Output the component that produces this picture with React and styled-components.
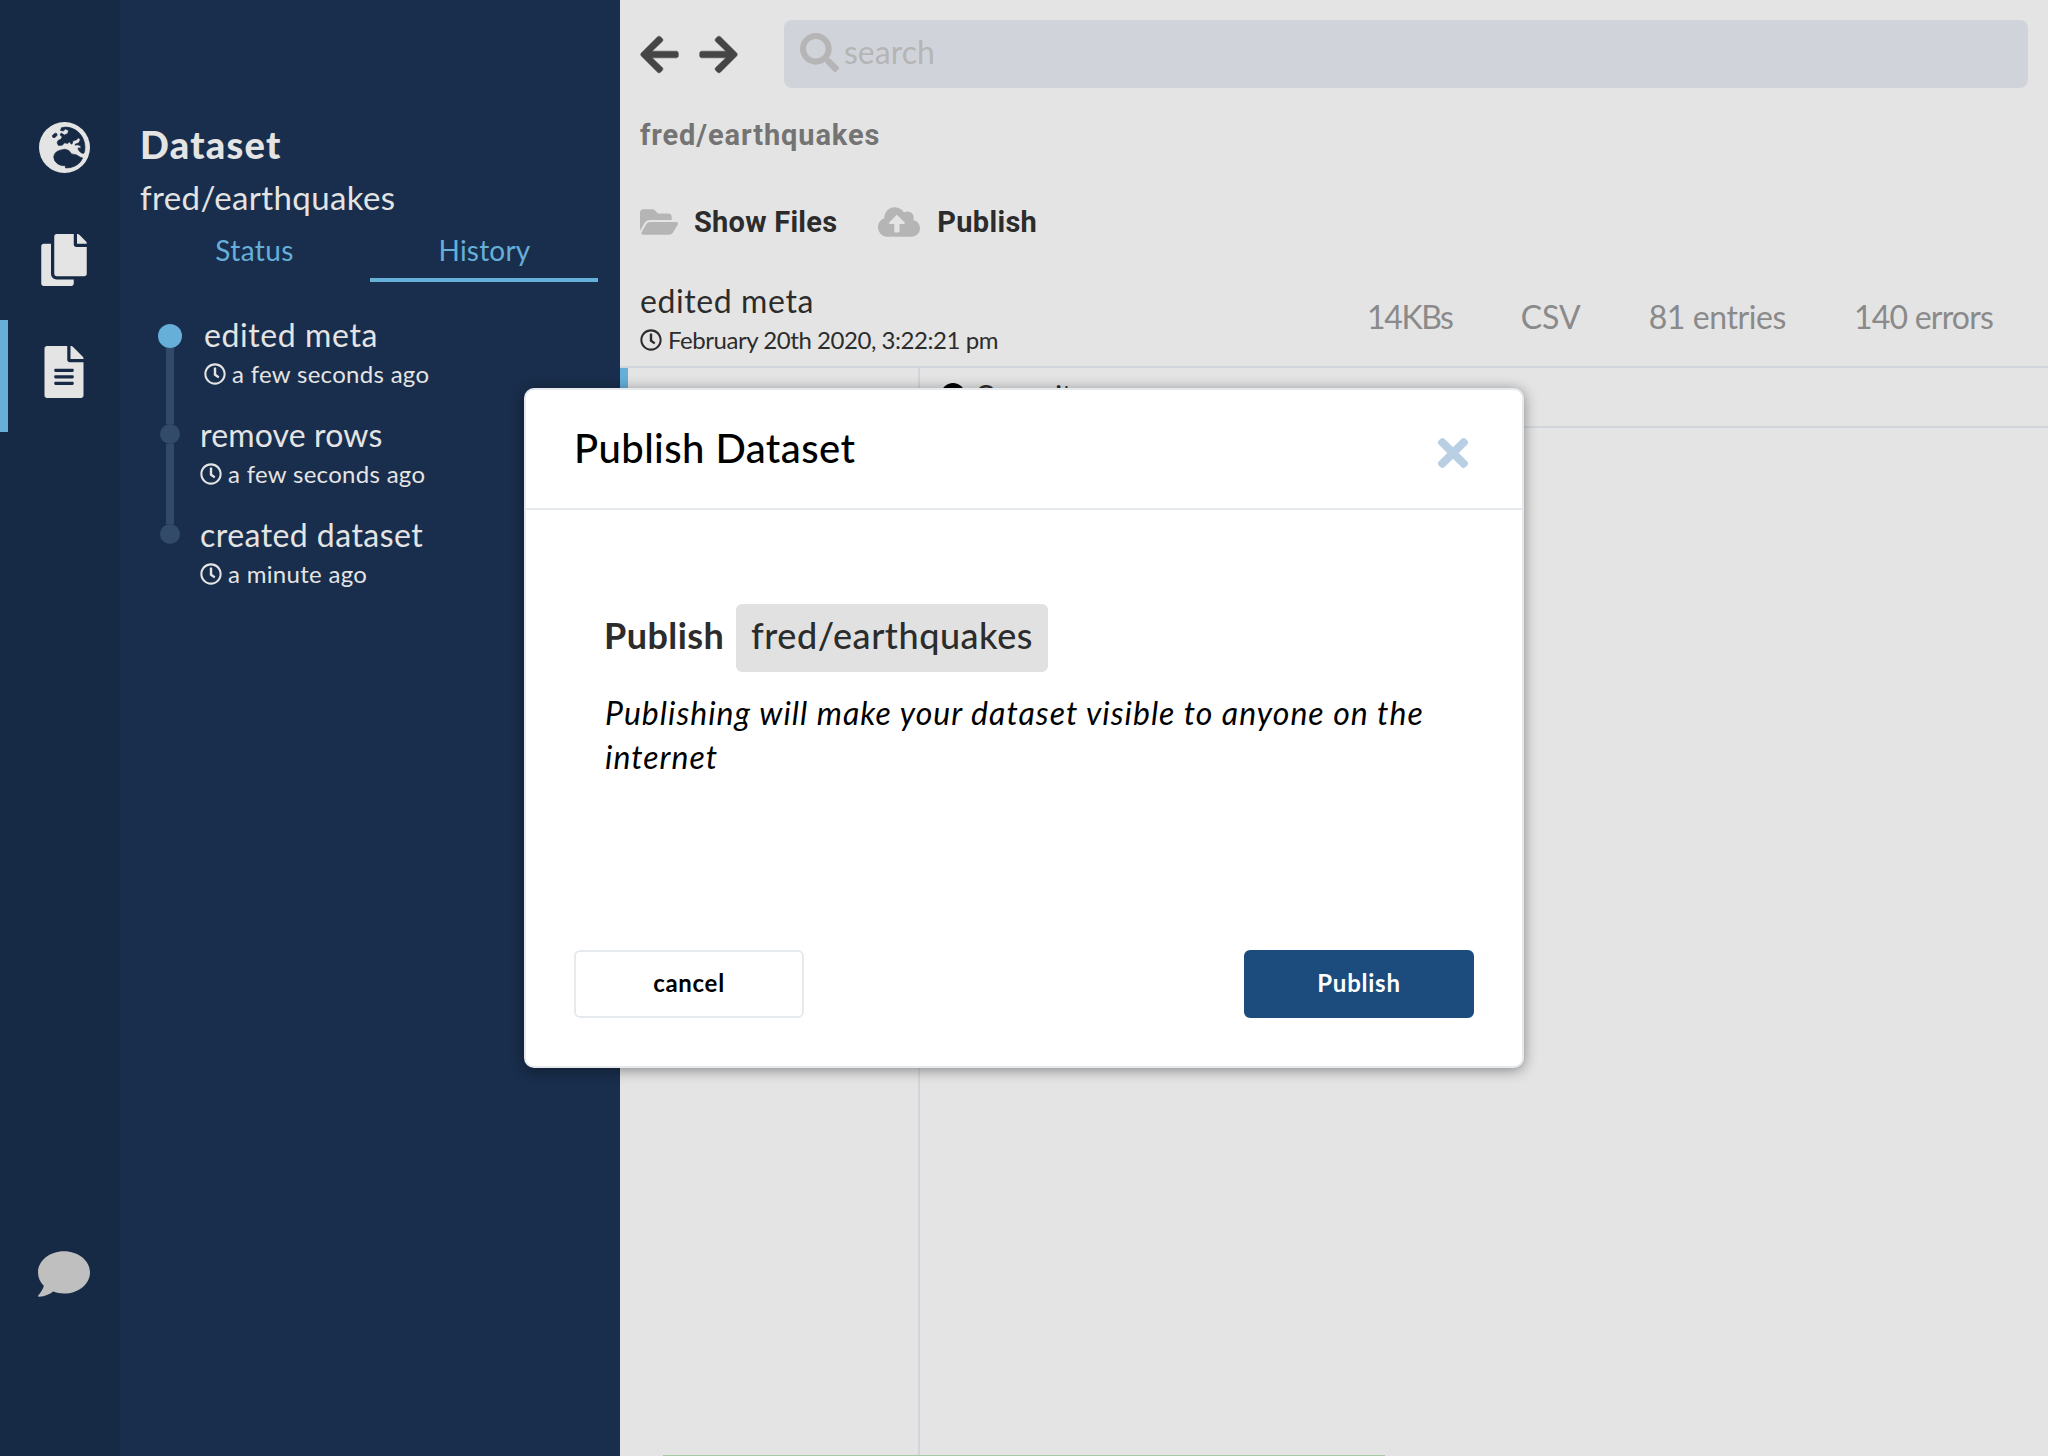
import React from 'react';
import styled, { createGlobalStyle } from 'styled-components';
import {
  FaArrowLeft,
  FaArrowRight,
  FaSearch,
  FaCopy,
  FaFileAlt,
  FaComment,
  FaFolderOpen,
  FaCloudUploadAlt,
  FaRegClock,
  FaTimes,
} from 'react-icons/fa';

const Global = createGlobalStyle`
  * { box-sizing: border-box; }
  body { margin: 0; overflow: hidden; font-family: Lato, "Liberation Sans", sans-serif; }
  svg { display: block; flex: none; }
`;

const Page = styled.div`
  position: relative;
  display: flex;
  width: 2048px;
  height: 1456px;
  overflow: hidden;
  background: #e4e4e4;
`;

const Text = styled.div`
  font-family: ${(p) => p.$family || 'inherit'};
  font-size: ${(p) => p.$size}px;
  line-height: ${(p) => p.$line}px;
  font-weight: ${(p) => p.$weight || 400};
  font-style: ${(p) => (p.$italic ? 'italic' : 'normal')};
  letter-spacing: ${(p) => p.$track || 0}px;
  color: ${(p) => p.$color || 'inherit'};
  white-space: nowrap;
`;

const Rail = styled.nav`
  display: flex;
  flex-direction: column;
  width: 120px;
  flex: none;
  padding: 96px 0 122px;
  background: #172a45;
  color: #e4e4e4;
`;

const RailItem = styled.div`
  display: flex;
  align-items: center;
  justify-content: center;
  height: 112px;
  padding: 0 ${(p) => (p.$active ? 8 : 0)}px ${(p) => p.$lift || 8}px 8px;
  margin-top: ${(p) => (p.$bottom ? 'auto' : 0)};
  border-left: ${(p) => (p.$active ? '8px solid #65afd9' : '0')};
  color: ${(p) => (p.$bottom ? '#bfbfbf' : 'inherit')};
`;

const Sidebar = styled.aside`
  width: 500px;
  flex: none;
  padding: 120px 22px 0 20px;
  background: #192e4c;
  color: #e4e4e4;
`;

const Tabs = styled.div`
  display: flex;
  gap: 2px;
  height: 55px;
  padding-top: 1px;
  color: #65afd9;
`;

const Tab = styled.div`
  flex: 1;
  display: flex;
  justify-content: center;
  padding-left: 1px;
  border-bottom: 4px solid ${(p) => (p.$active ? '#65afd9' : 'transparent')};
`;

const Timeline = styled.div`
  padding-top: 32px;
`;

const Commit = styled.div`
  display: flex;
  height: 100px;
`;

const Marker = styled.div`
  display: flex;
  flex-direction: column;
  align-items: center;
  width: 60px;
  flex: none;
`;

const Segment = styled.div`
  width: 8px;
  height: 10px;
  flex: ${(p) => (p.$grow ? '1' : 'none')};
  background: ${(p) => (p.$hidden ? 'transparent' : '#324b68')};
`;

const Dot = styled.div`
  width: ${(p) => (p.$active ? 24 : 20)}px;
  height: ${(p) => (p.$active ? 24 : 20)}px;
  border-radius: 50%;
  background: ${(p) => (p.$active ? '#65afd9' : '#324b68')};
`;

const CommitBody = styled.div`
  padding: 1px 0 0 ${(p) => (p.$active ? 4 : 0)}px;
`;

const Stamp = styled.div`
  display: flex;
  align-items: center;
  gap: 6px;
`;

const Main = styled.main`
  flex: 1;
  min-width: 0;
  display: flex;
  flex-direction: column;
`;

const TopBar = styled.header`
  display: flex;
  align-items: center;
  height: 108px;
  padding: 0 20px 0 18px;
`;

const Arrows = styled.div`
  display: flex;
  gap: 16px;
  width: 146px;
  color: #454545;
  stroke: #454545;

  svg {
    stroke-width: 6px;
    stroke-linejoin: round;
  }
`;

const Search = styled.div`
  flex: 1;
  display: flex;
  align-items: center;
  gap: 5px;
  height: 68px;
  padding: 0 16px 4px;
  border-radius: 8px;
  background: #d0d4da;
  color: #b5b5b5;
`;

const Crumb = styled.div`
  padding: 5px 20px 0;
`;

const Actions = styled.div`
  display: flex;
  gap: 41px;
  height: 56px;
  margin-top: 37px;
  padding: 0 20px;
  color: #b5b5b5;
`;

const Action = styled.div`
  display: flex;
  align-items: center;
  gap: ${(p) => p.$gap}px;
`;

const Info = styled.section`
  display: flex;
  justify-content: space-between;
  height: 118px;
  padding: 31px 55px 0 20px;
  border-bottom: 2px solid #d0d6db;
  color: #2c2c2c;
`;

const Stats = styled.div`
  display: flex;
  gap: 68px;
  padding-top: 16px;
  color: #8a8a8a;
`;

const Body = styled.section`
  flex: 1;
  display: flex;
  min-height: 0;
`;

const Components = styled.div`
  width: 300px;
  border-right: 2px solid #d0d6db;
`;

const ActiveComponent = styled.div`
  height: 60px;
  border-left: 8px solid #65afd9;
`;

const Detail = styled.div`
  flex: 1;
`;

const DetailHead = styled.div`
  display: flex;
  align-items: center;
  gap: 10px;
  height: 60px;
  padding: 0 21px 4px;
  border-bottom: 2px solid #d0d6db;
  color: #2c2c2c;
`;

const Disc = styled.div`
  width: 24px;
  height: 24px;
  border-radius: 50%;
  background: #000;
`;

const Toast = styled.div`
  position: absolute;
  left: 663px;
  bottom: 0;
  width: 722px;
  height: 1px;
  background: #a6cba4;
`;

const Modal = styled.div`
  position: absolute;
  left: 524px;
  top: 388px;
  width: 1000px;
  height: 680px;
  display: flex;
  flex-direction: column;
  border: 2px solid #e6eaef;
  border-radius: 10px;
  background: #fff;
  box-shadow: 0 2px 14px rgba(0, 0, 0, 0.42);
`;

const ModalHead = styled.div`
  display: flex;
  justify-content: space-between;
  height: 120px;
  padding: 26px 47px 0 48px;
  border-bottom: 2px solid #e6eaef;
`;

const Close = styled.div`
  height: 80px;
  display: flex;
  align-items: center;
  color: #b9cfe3;
  margin-top: -3px;
`;

const ModalBody = styled.div`
  flex: 1;
  padding: 94px 78px 0 79px;
`;

const Subject = styled.div`
  display: flex;
  align-items: flex-start;
  gap: 12px;
  height: 68px;
  margin: 0 0 19px -1px;
  color: #2c2c2c;
`;

const Chip = styled.div`
  display: flex;
  width: 312px;
  height: 68px;
  justify-content: center;
  border-radius: 6px;
  background: #e1e1e1;
`;

const PublishLabel = styled.div`
  width: 120px;
  height: 68px;
`;

const ModalFoot = styled.div`
  display: flex;
  justify-content: space-between;
  padding: 0 48px 48px;
`;

const Button = styled.button`
  display: flex;
  justify-content: center;
  width: 230px;
  height: 68px;
  padding: 0;
  border: 2px solid ${(p) => (p.$primary ? '#1c4c7e' : '#e6eaee')};
  border-radius: 6px;
  background: ${(p) => (p.$primary ? '#1c4c7e' : '#fff')};
  color: ${(p) => (p.$primary ? '#fff' : '#000')};
  font-family: inherit;
`;

const Globe = () => (
  <svg width="51" height="51" viewBox="45 38 152 152">
    <circle cx="121" cy="114" r="76" fill="#e4e4e4" />
    <g fill="#172a45" stroke="#172a45" strokeWidth="2" strokeLinejoin="round">
      <path d="M112 55 Q122 52 134 54 C162 60 182 84 182 114 Q182 124 179 131 L173 131 L166 126 L161 118 L163 115 L170 117 L169 109 L160 106 L153 107 L153 104 L164 100 L168 91 L163 85 L157 91 L146 94 L145 101 L141 104 L136 97 L130 102 L122 100 L114 107 L103 108 L99 100 L102 93 L111 89 L114 82 L108 77 L111 71 L121 77 L131 72 L133 63 L124 59 L117 65 L109 63 Z" />
      <path d="M89 142 Q90 127 108 122 L122 119 L134 123 L142 133 L157 136 L168 143 L175 145 Q166 168 138 174 L124 175 L123 168 Q112 170 101 163 Q89 155 89 142 Z" />
      <ellipse cx="92" cy="78" rx="8" ry="5" transform="rotate(-40 92 78)" />
    </g>
  </svg>
);

const HEADING = 'Roboto, "Liberation Sans", sans-serif';

const commits = [
  { title: 'edited meta', when: 'a few seconds ago', track: 0.6 },
  { title: 'remove rows', when: 'a few seconds ago', track: 0.15 },
  { title: 'created dataset', when: 'a minute ago', track: 0.45 },
];

const stats = [
  { label: '14KBs', track: -1.3 },
  { label: 'CSV', track: 0 },
  { label: '81 entries', track: -0.4 },
  { label: '140 errors', track: -0.8 },
];

export default function App() {
  return (
    <Page>
      <Global />
      <Rail>
        <RailItem $lift={10}><Globe /></RailItem>
        <RailItem><FaCopy size={52} /></RailItem>
        <RailItem $active><FaFileAlt size={52} /></RailItem>
        <RailItem $bottom><FaComment size={52} /></RailItem>
      </Rail>
      <Sidebar>
        <Text $size={38} $line={48} $weight={900} $track={1.25}>Dataset</Text>
        <Text $size={33} $line={59} $track={0.4}>fred/earthquakes</Text>
        <Tabs>
          <Tab><Text $size={28} $line={45} $track={0.4}>Status</Text></Tab>
          <Tab $active><Text $size={28} $line={45} $track={0.2}>History</Text></Tab>
        </Tabs>
        <Timeline>
          {commits.map((c, i) => (
            <Commit key={c.title}>
              <Marker>
                <Segment $hidden={i === 0} />
                <Dot $active={i === 0} />
                <Segment $grow $hidden={i === commits.length - 1} />
              </Marker>
              <CommitBody $active={i === 0}>
                <Text $size={32} $line={40} $track={c.track}>{c.title}</Text>
                <Stamp>
                  <FaRegClock size={22} />
                  <Text $size={24} $line={37} $track={0.3}>{c.when}</Text>
                </Stamp>
              </CommitBody>
            </Commit>
          ))}
        </Timeline>
      </Sidebar>
      <Main>
        <TopBar>
          <Arrows>
            <FaArrowLeft size={43} />
            <FaArrowRight size={43} />
          </Arrows>
          <Search>
            <FaSearch size={39} />
            <Text $size={32} $line={62}>search</Text>
          </Search>
        </TopBar>
        <Crumb>
          <Text $family={HEADING} $size={29} $line={44} $weight={700} $track={0.9} $color="#747474">fred/earthquakes</Text>
        </Crumb>
        <Actions>
          <Action $gap={16}>
            <FaFolderOpen size={38} />
            <Text $family={HEADING} $size={29} $line={58} $weight={700} $track={0.25} $color="#2c2c2c">Show Files</Text>
          </Action>
          <Action $gap={17}>
            <FaCloudUploadAlt size={42} />
            <Text $family={HEADING} $size={29} $line={58} $weight={700} $track={0.3} $color="#2c2c2c">Publish</Text>
          </Action>
        </Actions>
        <Info>
          <div>
            <Text $size={32} $line={40} $track={0.6}>edited meta</Text>
            <Stamp>
              <FaRegClock size={22} />
              <Text $size={24} $line={37} $track={-0.45}>February 20th 2020, 3:22:21 pm</Text>
            </Stamp>
          </div>
          <Stats>
            {stats.map((s) => (
              <Text key={s.label} $size={32} $line={40} $track={s.track}>{s.label}</Text>
            ))}
          </Stats>
        </Info>
        <Body>
          <Components><ActiveComponent /></Components>
          <Detail>
            <DetailHead>
              <Disc />
              <Text $size={28} $line={54}>Commit</Text>
            </DetailHead>
          </Detail>
        </Body>
      </Main>
      <Toast />
      <Modal>
        <ModalHead>
          <Text $size={40} $line={64} $weight={500} $track={0.42} $color="#000">Publish Dataset</Text>
          <Close><FaTimes size={44} /></Close>
        </ModalHead>
        <ModalBody>
          <Subject>
            <PublishLabel><Text $size={36} $line={62} $weight={700} $track={0.45}>Publish</Text></PublishLabel>
            <Chip><Text $size={36} $line={62} $weight={500} $track={0.55}>fred/earthquakes</Text></Chip>
          </Subject>
          <Text $size={32} $line={44} $italic $track={1.02}>
            Publishing will make your dataset visible to anyone on the<br />internet
          </Text>
        </ModalBody>
        <ModalFoot>
          <Button><Text $size={24} $line={62} $weight={700} $track={0.7}>cancel</Text></Button>
          <Button $primary><Text $size={24} $line={62} $weight={700} $track={0.75}>Publish</Text></Button>
        </ModalFoot>
      </Modal>
    </Page>
  );
}
